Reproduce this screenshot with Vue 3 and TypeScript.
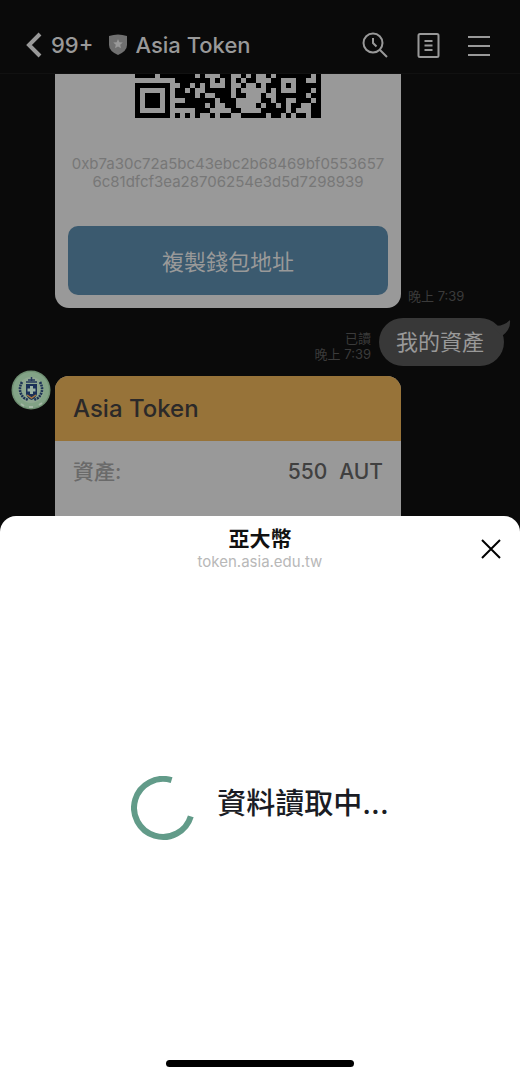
<script setup lang="ts">
const walletAddress: string[] = [
  '0xb7a30c72a5bc43ebc2b68469bf0553657',
  '6c81dfcf3ea28706254e3d5d7298939',
]

const qrRows: string[] = [
  '####.#######.#...##..#.#..#.#######.#',
  '........#######.#.#.#.##...##...##..#',
  '#######..##.#.#...#..#..#.###.#.#####',
  '#.....#.##.#..#####.#.....#.#...###.#',
  '#.###.#.####.#..###.##...#..######.##',
  '#.###.#...######.###.....##.##..###.#',
  '#.###.#.######.#..##....#.##.#.##..##',
  '#.....#.....###....##....#####.#...##',
  '#######.#.#.#..#.##..#####.##.#.##.##',
]

interface Cell {
  x: number
  y: number
}

const cells: Cell[] = qrRows.flatMap((row, y) =>
  [...row].flatMap((c, x) => (c === '#' ? [{ x, y }] : [])),
)
</script>

<template>
  <div class="screen">
    <header class="topbar">
      <button class="back" type="button" aria-label="99+">
        <svg width="16" height="26" viewBox="0 0 16 26"><path d="M14 2 3 13l11 11" /></svg>
        <span>99+</span>
      </button>
      <svg class="shield" width="18" height="21" viewBox="0 0 18 21">
        <path class="plate" d="M0 2Q9-1 18 2v9q0 6-9 10Q0 17 0 11Z" />
        <path class="star" d="m9 5 1.4 3.2 3.4.3-2.6 2.3.8 3.4-3-1.8-3 1.8.8-3.4-2.6-2.3 3.4-.3Z" />
      </svg>
      <h1>Asia Token</h1>
      <nav class="tools">
        <button type="button" aria-label="Search">
          <svg width="26" height="28" viewBox="0 0 26 28">
            <circle cx="11" cy="12" r="9.5" /><path d="m18 19 7 7M11 7v5l3.5 3.5" />
          </svg>
        </button>
        <button type="button" aria-label="Notes">
          <svg width="24" height="28" viewBox="0 0 24 28">
            <rect x="2.500" y="3" width="20" height="23" rx="1.500" /><path d="M8.500 10h8M8.500 14.500h8M8.500 19h8" />
          </svg>
        </button>
        <button type="button" aria-label="Menu">
          <svg width="22" height="28" viewBox="0 0 22 28"><path d="M0 6h22M0 15h22M0 24h22" /></svg>
        </button>
      </nav>
    </header>

    <main class="chat">
      <div class="row incoming">
        <section class="card wallet">
          <svg class="qr" viewBox="0 0.3 37 8.7" preserveAspectRatio="none" shape-rendering="crispEdges">
            <rect v-for="c in cells" :key="`${c.x}-${c.y}`" :x="c.x" :y="c.y" width="1" height="1" />
          </svg>
          <p class="address">
            <span v-for="line in walletAddress" :key="line">{{ line }}</span>
          </p>
          <button class="copy" type="button">複製錢包地址</button>
        </section>
        <time class="stamp">晚上 7:39</time>
      </div>

      <div class="row outgoing">
        <div class="stamp read"><span>已讀</span><time>晚上 7:39</time></div>
        <div class="bubble">
          我的資產
          <svg class="tail" width="20" height="18" viewBox="0 0 20 18"><path d="M0 5q11 3 19-5 1 10-8 16Z" /></svg>
        </div>
      </div>

      <div class="row incoming">
        <svg class="avatar" width="40" height="40" viewBox="0 0 40 40">
          <circle cx="20" cy="20" r="19.5" fill="#6f8f72" />
          <circle cx="20" cy="20" r="18" fill="#82a386" />
          <circle cx="20" cy="20" r="13" fill="#8fa891" />
          <g fill="none" stroke="#1d3355" stroke-width="2.6" stroke-dasharray="2 .8">
            <path d="M11 12q-5 9 2 16l4 2" /><path d="M29 12q5 9-2 16l-4 2" />
          </g>
          <path d="M15 14h11v10q-1 4-5.5 6Q16 28 15 24Z" fill="#1b3158" />
          <path d="M15 12h11M17 10h7M20.5 7v4" stroke="#26395c" stroke-width="1.5" />
          <path d="M20.5 16v8M16.5 20h8" stroke="#9bb3a4" stroke-width="3" />
          <path d="m16 25 4.5 3 4.5-3" fill="none" stroke="#a77742" stroke-width="1.5" />
          <path d="m10 34 3 2M18 37h4M28 35l3-2" stroke="#a5b8a6" stroke-width="2" />
        </svg>
        <section class="card asset">
          <h2>Asia Token</h2>
          <dl>
            <dt>資產:</dt>
            <dd><span>550</span><span>AUT</span></dd>
          </dl>
        </section>
      </div>
    </main>

    <section class="sheet" role="dialog" aria-labelledby="sheet-title">
      <header class="sheet-head">
        <h2 id="sheet-title">亞大幣</h2>
        <p>token.asia.edu.tw</p>
        <button class="close" type="button" aria-label="Close">
          <svg width="20" height="20" viewBox="0 0 20 20"><path d="m1 1 18 18M19 1 1 19" /></svg>
        </button>
      </header>
      <div class="loading" role="status">
        <svg class="ring" width="64" height="64" viewBox="0 0 64 64">
          <path d="M40.6 4.2A29 29 0 1 0 59.8 40.3" />
        </svg>
        <span>資料讀取中...</span>
      </div>
      <div class="home-bar"></div>
    </section>
  </div>
</template>

<style>
body {
  background: #0a0a0a;
}
</style>

<style scoped>
.screen {
  display: flex;
  flex-direction: column;
  min-height: 100vh;
  background: #0a0a0a;
  color: #999;
  font-family: Inter, "Noto Sans CJK TC", sans-serif;
}
h1, h2, p, dl, dd {
  margin: 0;
}
button {
  padding: 0;
  border: 0;
  background: none;
  color: inherit;
  font: inherit;
}
svg {
  display: block;
  flex: none;
}
.topbar {
  display: flex;
  align-items: center;
  box-sizing: border-box;
  height: 74px;
  padding: 16px 30px 0 26px;
  border-bottom: 1px solid #111;
}
.back {
  display: flex;
  align-items: center;
  gap: 9px;
  font-size: 22px;
  font-weight: 500;
}
.back path {
  fill: none;
  stroke: #999;
  stroke-width: 4;
}
.shield {
  margin: 0 8px 0 16px;
}
.plate {
  fill: #707070;
}
.star {
  fill: #999;
}
h1 {
  font-size: 22px;
  font-weight: 500;
  line-height: 28px;
}
.tools {
  display: flex;
  align-items: center;
  gap: 28px;
  margin-left: auto;
}
.tools svg {
  fill: none;
  stroke: #999;
  stroke-width: 2;
}
.chat {
  display: flex;
  flex-direction: column;
  gap: 10px;
}
.row {
  display: flex;
  align-items: flex-end;
}
.incoming {
  position: relative;
  padding-left: 55px;
}
.card {
  flex: 0 1 346px;
  background: #999;
  overflow: hidden;
}
.wallet {
  box-sizing: border-box;
  padding: 0 13px 13px;
  border-radius: 0 0 14px 14px;
}
.qr {
  width: 186px;
  height: 44px;
  margin: 0 auto;
  fill: #000;
}
.address {
  display: flex;
  flex-direction: column;
  align-items: center;
  margin: 37px 0 35px;
  color: #777;
  font-size: 15px;
  line-height: 18px;
}
.copy {
  width: 100%;
  height: 69px;
  padding-bottom: 2px;
  border-radius: 10px;
  background: #3b5a6f;
  color: #999;
  font-size: 22px;
}
.stamp {
  margin-left: 7px;
  color: #3b3b3b;
  font-size: 13px;
  line-height: 16px;
  padding-bottom: 4px;
}
.outgoing {
  justify-content: flex-end;
  gap: 8px;
  padding-right: 16px;
}
.read {
  display: flex;
  flex-direction: column;
  align-items: flex-end;
}
.bubble {
  position: relative;
  padding: 0 20px 0 17px;
  border-radius: 24px;
  background: #383838;
  font-size: 22px;
  line-height: 48px;
}
.tail {
  position: absolute;
  top: 2px;
  right: -7px;
  fill: #383838;
}
.avatar {
  position: absolute;
  top: -6px;
  left: 11px;
}
.asset {
  border-radius: 14px 14px 0 0;
}
.asset h2 {
  padding: 0 18px;
  background: #977339;
  color: #2b2929;
  font-size: 24px;
  font-weight: 500;
  line-height: 65px;
}
dl {
  display: flex;
  justify-content: space-between;
  padding: 15px 18px 44px;
  font-size: 21px;
  font-weight: 500;
  line-height: 32px;
}
dt {
  color: #6a6a6a;
}
dd {
  display: flex;
  gap: 12px;
  color: #404040;
}
.sheet {
  position: relative;
  display: flex;
  flex: 1;
  flex-direction: column;
  margin-top: -16px;
  border-radius: 16px 16px 0 0;
  background: #fff;
}
.sheet-head {
  position: relative;
  padding-top: 9px;
  text-align: center;
}
.sheet-head h2 {
  color: #111;
  font-size: 21px;
  font-weight: 700;
  line-height: 28px;
}
.sheet-head p {
  color: #b8b8b8;
  font-size: 15px;
  line-height: 18px;
}
.close {
  position: absolute;
  top: 23px;
  right: 19px;
}
.close path {
  stroke: #000;
  stroke-width: 2;
}
.loading {
  display: flex;
  flex: 1;
  align-items: center;
  justify-content: center;
  gap: 22px;
  padding-bottom: 16px;
  color: #1a1c24;
  font-size: 29px;
  font-weight: 500;
  line-height: 40px;
}
.loading span {
  padding-bottom: 8px;
}
.ring path {
  fill: none;
  stroke: #629b89;
  stroke-width: 6;
}
.home-bar {
  width: 36%;
  height: 7px;
  margin: 0 auto 11px;
  border-radius: 4px;
  background: #000;
}
</style>
